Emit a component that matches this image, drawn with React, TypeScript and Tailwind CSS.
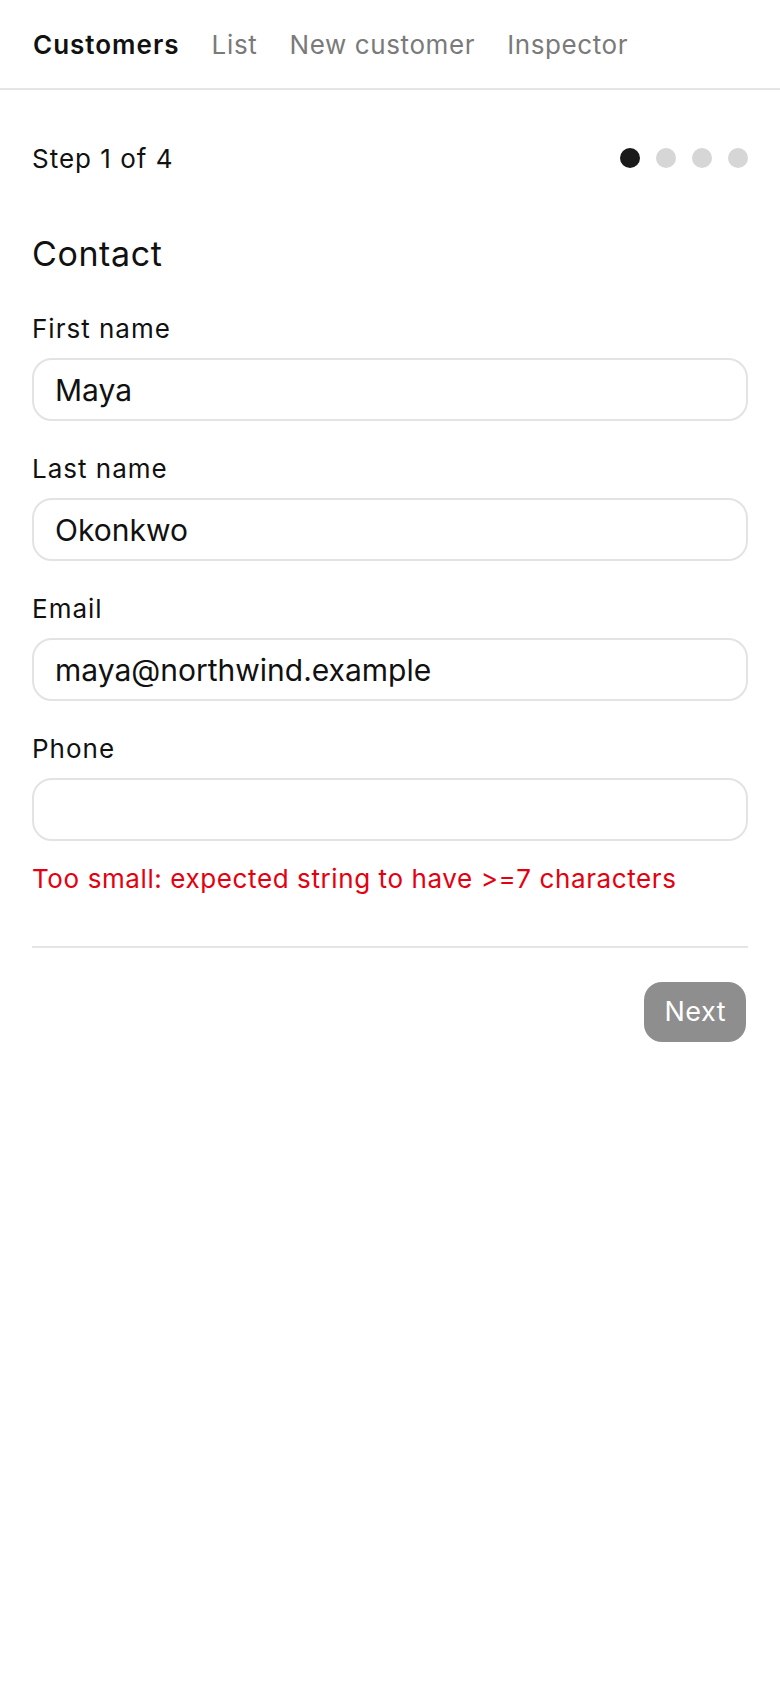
import React from "react";

const font = { fontFamily: "Inter, 'Noto Sans', sans-serif" };

function Field({ label, value }: { label: string; value: string }) {
  return (
    <div className="flex flex-col">
      <label className="text-[26px] leading-[32px] tracking-[1px] text-[#111111]">{label}</label>
      <div className="mt-[13px] h-[63px] rounded-[20px] border-2 border-[#e3e3e3] bg-white flex items-center px-[21px]">
        <span className="text-[30px] leading-[36px] text-[#111111]">{value}</span>
      </div>
    </div>
  );
}

export default function App() {
  return (
    <div className="min-h-[1688px] bg-white" style={font}>
      <nav className="h-[90px] flex items-center gap-[32px] px-[33px] border-b-2 border-[#e5e5e5]">
        <span className="text-[26px] tracking-[1px] font-semibold text-[#111111]">Customers</span>
        <span className="text-[26px] tracking-[0.7px] text-[#7a7a7a]">List</span>
        <span className="text-[26px] tracking-[0.6px] text-[#7a7a7a]">New customer</span>
        <span className="text-[26px] tracking-[0.6px] text-[#7a7a7a]">Inspector</span>
      </nav>
      <main className="px-[32px]">
        <div className="mt-[48px] h-[40px] flex items-center justify-between">
          <span className="text-[26px] tracking-[1px] text-[#111111]">Step 1 of 4</span>
          <div className="flex items-center gap-[16px]">
            <span className="w-[20px] h-[20px] rounded-full bg-[#1a1a1a]" />
            <span className="w-[20px] h-[20px] rounded-full bg-[#d6d6d6]" />
            <span className="w-[20px] h-[20px] rounded-full bg-[#d6d6d6]" />
            <span className="w-[20px] h-[20px] rounded-full bg-[#d6d6d6]" />
          </div>
        </div>
        <h2 className="mt-[56px] text-[34px] leading-[40px] tracking-[0.6px] text-[#111111]">Contact</h2>
        <div className="mt-[39px] flex flex-col gap-[32px]">
          <Field label="First name" value="Maya" />
          <Field label="Last name" value="Okonkwo" />
          <Field label="Email" value="maya@northwind.example" />
          <Field label="Phone" value="" />
        </div>
        <p className="mt-[22px] text-[26px] leading-[32px] tracking-[0.6px] text-[#e5000f]">
          Too small: expected string to have &gt;=7 characters
        </p>
        <div className="mt-[51px] h-[2px] bg-[#e5e5e5]" />
        <div className="mt-[34px] flex justify-end pr-[2px]">
          <button className="h-[60px] px-[20px] rounded-[18px] bg-[#8e8e8e] text-white text-[27px] tracking-[0.5px]">
            Next
          </button>
        </div>
      </main>
    </div>
  );
}
